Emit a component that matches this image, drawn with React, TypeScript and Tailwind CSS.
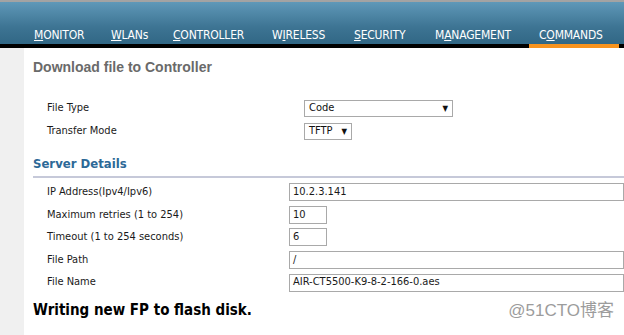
import React from "react";

const navItems = [
  { pre: "", key: "M", post: "ONITOR", w: "w-[77px]" },
  { pre: "", key: "W", post: "LANs", w: "w-[62px]" },
  { pre: "", key: "C", post: "ONTROLLER", w: "w-[99px]" },
  { pre: "W", key: "I", post: "RELESS", w: "w-[82px]" },
  { pre: "", key: "S", post: "ECURITY", w: "w-[81px]" },
  { pre: "M", key: "A", post: "NAGEMENT", w: "w-[104px]" },
  { pre: "C", key: "O", post: "MMANDS", w: "w-[90px]", active: true },
];

const labelFont = { fontFamily: "'DejaVu Sans Condensed', 'DejaVu Sans', sans-serif" };

function Row({ label, labelW, h = "h-[23px]", children }: { label: string; labelW: string; h?: string; children: React.ReactNode }) {
  return (
    <div className={`flex ${h} items-center`}>
      <div className={`${labelW} pl-[14px] text-[11px] text-[#1a1a1a]`} style={labelFont}>
        {label}
      </div>
      {children}
    </div>
  );
}

function Field({ value, w }: { value: string; w: string }) {
  return (
    <div
      className={`${w} flex h-[18px] items-center border border-[#a9a9a9] bg-white pl-[3px] text-[11px] text-[#1a1a1a]`}
      style={labelFont}
    >
      {value}
    </div>
  );
}

function Select({ value, w }: { value: string; w: string }) {
  return (
    <div
      className={`${w} flex h-[17px] items-center justify-between border border-[#a9a9a9] bg-white px-[4px] text-[11px] text-[#111]`}
      style={labelFont}
    >
      <span>{value}</span>
      <span className="text-[8px] leading-none">▼</span>
    </div>
  );
}

export default function App() {
  return (
    <div className="relative h-[335px] w-[624px] overflow-hidden bg-white">
      {/* Top navigation */}
      <div className="border-t-[2px] border-[#a3a3a3]">
        <div className="flex h-[46px] items-end border-b-[4px] border-black bg-[linear-gradient(to_bottom,#5f98b8,#3d7493_60%,#316785)] pl-[24px]">
          {navItems.map((n) => (
            <div
              key={n.key + n.post}
              className={`${n.w} -mb-[4px] border-b-[4px] pb-[2px] pl-[10px] text-[12px] leading-[14px] tracking-[-0.2px] text-white ${n.active ? "border-[#f7931e]" : "border-black"}`}
              style={labelFont}
            >
              {n.pre}
              <span className="underline">{n.key}</span>
              {n.post}
            </div>
          ))}
        </div>
      </div>

      <div className="flex">
        <div className="w-[24px] shrink-0 self-stretch bg-[#f0f0f0]" />
        <div className="h-[287px] flex-1 pl-[9px]">
          <h1
            className="mt-[11px] text-[14px] font-bold leading-[16px] text-[#6a6a6a]"
            style={{ fontFamily: "'Liberation Sans', Arial, sans-serif" }}
          >
            Download file to Controller
          </h1>

          <div className="mt-[22px]">
            <Row label="File Type" labelW="w-[271px]">
              <Select value="Code" w="w-[149px]" />
            </Row>
            <Row label="Transfer Mode" labelW="w-[271px]">
              <Select value="TFTP" w="w-[48px]" />
            </Row>
          </div>

          <h2
            className="mt-[13px] border-b-[2px] border-[#c6c9d9] pb-[4px] text-[13px] font-bold leading-[16px] text-[#2d6997]"
            style={labelFont}
          >
            Server Details
          </h2>

          <div className="mt-[3px]">
            <Row label="IP Address(Ipv4/Ipv6)" labelW="w-[256px]" h="h-[22.6px]">
              <Field value="10.2.3.141" w="w-[335px]" />
            </Row>
            <Row label="Maximum retries (1 to 254)" labelW="w-[256px]" h="h-[22.6px]">
              <Field value="10" w="w-[38px]" />
            </Row>
            <Row label="Timeout (1 to 254 seconds)" labelW="w-[256px]" h="h-[22.6px]">
              <Field value="6" w="w-[38px]" />
            </Row>
            <Row label="File Path" labelW="w-[256px]" h="h-[22.6px]">
              <Field value="/" w="w-[335px]" />
            </Row>
            <Row label="File Name" labelW="w-[256px]" h="h-[22.6px]">
              <Field value="AIR-CT5500-K9-8-2-166-0.aes" w="w-[335px]" />
            </Row>
          </div>

          <p className="mt-[7px] text-[15px] font-bold leading-[18px] text-black" style={labelFont}>
            Writing new FP to flash disk.
          </p>
        </div>
      </div>

      {/* watermark */}
      <div
        className="absolute bottom-[12px] right-[10px] text-[17px] text-[#9c9c9c]"
        style={{ fontFamily: "'Liberation Sans', 'Noto Sans CJK SC', sans-serif" }}
      >
        @51CTO博客
      </div>
    </div>
  );
}
